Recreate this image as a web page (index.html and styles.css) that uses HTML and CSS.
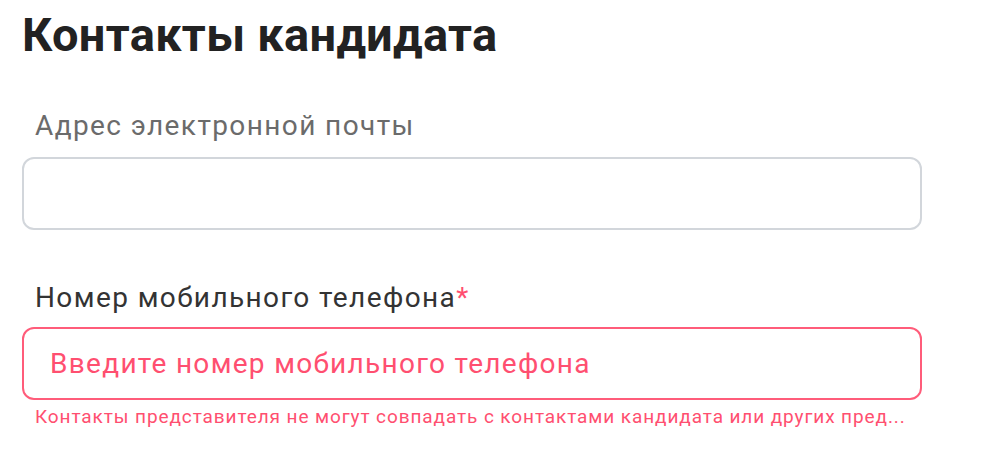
FILE: index.html
```html
<!DOCTYPE html>
<html lang="ru">
<head>
    <meta charset="UTF-8">
    <meta name="viewport" content="width=device-width, initial-scale=1.0">
    <link rel="stylesheet" href="styles.css">
    <title>Контакты кандидата</title>
</head>
<body>

<div class="contacts">
    <h1>Контакты кандидата</h1>

    <div class="field">
        <label class="field-label muted" for="email">Адрес электронной почты</label>
        <input id="email" class="field-input" type="text" value="">
    </div>

    <div class="field">
        <label class="field-label" for="phone">Номер мобильного телефона<span class="required">*</span></label>
        <input id="phone" class="field-input invalid" type="tel" placeholder="Введите номер мобильного телефона">
        <div class="field-error">Контакты представителя не могут совпадать с контактами кандидата или других пред...</div>
    </div>
</div>

</body>
</html>
```

FILE: styles.css
```css
body {
    font-family: Roboto, "Noto Sans", Arial, sans-serif;
    margin: 0;
    background-color: #ffffff;
}

.contacts {
    width: 900px;
    padding: 7px 0 0 22px;
}

h1 {
    margin: 0 0 46px 0;
    font-size: 47px;
    font-weight: 700;
    line-height: 56px;
    letter-spacing: 0.3px;
    color: #222222;
}

.field {
    display: flex;
    flex-direction: column;
    margin-bottom: 51px;
}

.field:last-child {
    margin-bottom: 0;
}

.field-label {
    padding-left: 13px;
    margin-bottom: 14px;
    font-size: 28px;
    line-height: 34px;
    letter-spacing: 1.4px;
    color: #333333;
}

.field-label.muted {
    color: #6b6b6b;
}

.field-label + .field-input.invalid {
    margin-top: -2px;
}

.required {
    color: #ff4f70;
}

.field-input {
    box-sizing: border-box;
    width: 900px;
    height: 73px;
    padding: 0 26px;
    border: 2px solid #d2d6db;
    border-radius: 12px;
    font-family: inherit;
    font-size: 28px;
    letter-spacing: 1.3px;
    color: #333333;
    outline: none;
}

.field-input.invalid {
    border-color: #ff5c7a;
}

.field-input.invalid::placeholder {
    color: #ff4f70;
    opacity: 1;
}

.field-error {
    padding-left: 13px;
    margin-top: 6px;
    font-size: 19px;
    line-height: 22px;
    letter-spacing: 0.9px;
    color: #ff4f70;
    white-space: nowrap;
}
```
